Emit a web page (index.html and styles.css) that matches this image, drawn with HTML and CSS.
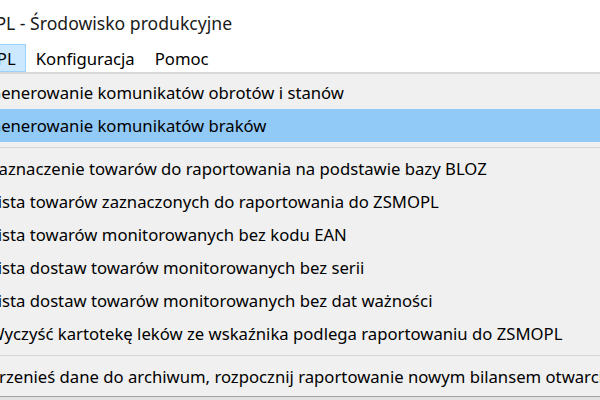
FILE: index.html
```html
<!DOCTYPE html>
<html>
<head>
  <title>ZSMOPL - Środowisko produkcyjne</title>
  <link rel="stylesheet" href="styles.css">
</head>
<body>
<div id='window'>
  <div id='titlebar'>
    <span class='title'>ZSMOPL - Środowisko produkcyjne</span>
  </div>
  <div id='menubar'>
    <span class='menu-item active'>ZSMOPL</span>
    <span class='menu-item'>Konfiguracja</span>
    <span class='menu-item'>Pomoc</span>
  </div>
  <div id='dropdown'>
    <div class='row'>Generowanie komunikatów obrotów i stanów</div>
    <div class='row selected'>Generowanie komunikatów braków</div>
    <div class='separator'></div>
    <div class='row'>Zaznaczenie towarów do raportowania na podstawie bazy BLOZ</div>
    <div class='row'>Lista towarów zaznaczonych do raportowania do ZSMOPL</div>
    <div class='row'>Lista towarów monitorowanych bez kodu EAN</div>
    <div class='row'>Lista dostaw towarów monitorowanych bez serii</div>
    <div class='row'>Lista dostaw towarów monitorowanych bez dat ważności</div>
    <div class='row'>Wyczyść kartotekę leków ze wskaźnika podlega raportowaniu do ZSMOPL</div>
    <div class='separator'></div>
    <div class='row'>Przenieś dane do archiwum, rozpocznij raportowanie nowym bilansem otwarcia</div>
  </div>
</div>
</body>
</html>
```

FILE: styles.css
```css
html, body {
    margin: 0;
    height: 100%;
    overflow: hidden;
    background: #e2e2e2;
}

body * {
    font-family: 'Noto Sans', 'Open Sans', sans-serif;
    font-size: 16.7px;
    color: #000;
}

#window {
    width: 900px;
    margin-left: -60px;
}

/* title bar */
#titlebar {
    background: #fff;
    height: 44px;
    display: flex;
    align-items: center;
    padding-left: 6px;
}

#titlebar .title {
    color: #1a1a1a;
    font-size: 17.6px;
    margin-top: 1px;
}

/* menu bar */
#menubar {
    background: #fff;
    height: 28px;
    display: flex;
    padding-left: 0;
}

.menu-item {
    display: flex;
    align-items: center;
    padding: 0 9px;
    border: 1px solid transparent;
    box-sizing: border-box;
}

.menu-item.active {
    background: #cce8ff;
    border-color: #99d1ff;
}

/* dropdown */
#dropdown {
    background: #f0f0f0;
    border-top: 2px solid #d9d9d9;
    border-bottom: 1px solid #a0a0a0;
    padding: 2px 0 3px;
    margin-left: -10px;
}

.row {
    height: 33px;
    line-height: 33px;
    padding-left: 59px;
    white-space: nowrap;
}

.row.selected {
    background: #91c9f7;
}

.separator {
    height: 10px;
    display: flex;
    align-items: center;
}

.separator::after {
    content: '';
    flex: 1;
    height: 1px;
    background: #d7d7d7;
    margin-left: 50px;
}
```
